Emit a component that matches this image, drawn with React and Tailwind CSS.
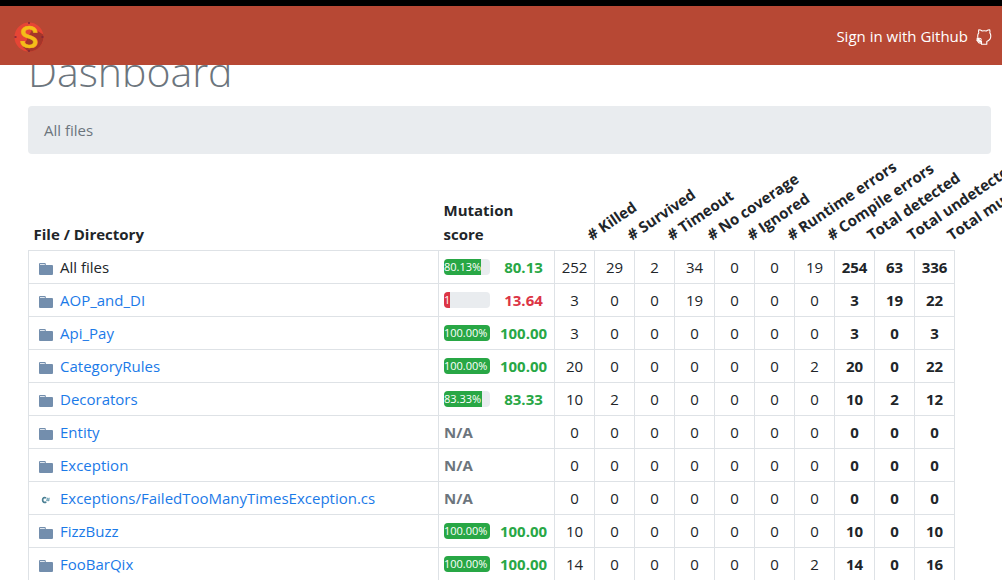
import clsx from "clsx";

const countHeaders = [
  "# Killed",
  "# Survived",
  "# Timeout",
  "# No coverage",
  "# Ignored",
  "# Runtime errors",
  "# Compile errors",
  "Total detected",
  "Total undetected",
  "Total mutants",
];

const rows = [
  { name: "All files", kind: "root", score: 80.13, counts: [252, 29, 2, 34, 0, 0, 19, 254, 63, 336] },
  { name: "AOP_and_DI", kind: "folder", score: 13.64, label: "1", counts: [3, 0, 0, 19, 0, 0, 0, 3, 19, 22] },
  { name: "Api_Pay", kind: "folder", score: 100, counts: [3, 0, 0, 0, 0, 0, 0, 3, 0, 3] },
  { name: "CategoryRules", kind: "folder", score: 100, counts: [20, 0, 0, 0, 0, 0, 2, 20, 0, 22] },
  { name: "Decorators", kind: "folder", score: 83.33, counts: [10, 2, 0, 0, 0, 0, 0, 10, 2, 12] },
  { name: "Entity", kind: "folder", score: null, counts: [0, 0, 0, 0, 0, 0, 0, 0, 0, 0] },
  { name: "Exception", kind: "folder", score: null, counts: [0, 0, 0, 0, 0, 0, 0, 0, 0, 0] },
  { name: "Exceptions/FailedTooManyTimesException.cs", kind: "file", score: null, counts: [0, 0, 0, 0, 0, 0, 0, 0, 0, 0] },
  { name: "FizzBuzz", kind: "folder", score: 100, counts: [10, 0, 0, 0, 0, 0, 0, 10, 0, 10] },
  { name: "FooBarQix", kind: "folder", score: 100, counts: [14, 0, 0, 0, 0, 0, 2, 14, 0, 16] },
];

function Logo() {
  return (
    <svg viewBox="0 0 32 32" className="size-8" role="img" aria-label="Stryker">
      <circle cx="16" cy="17" r="14.500" fill="#e64535" />
      <path d="M20 8 30.200 14.500A14.500 14.500 0 0 1 15 31.500L10 27Z" fill="#a5362a" />
      <path d="M16 2v2M16 30v2M1.500 17h2M28.500 17h2" stroke="#7d2438" strokeWidth="1.400" />
      <text x="16" y="28" textAnchor="middle" fontSize="31" fontWeight="500" fontFamily="Roboto, sans-serif" fill="#f5bd18" stroke="#f5bd18" strokeWidth="0.500">
        S
      </text>
    </svg>
  );
}

function GithubIcon() {
  return (
    <svg viewBox="0 0 16 16" className="mt-0.5 size-4" fill="none" stroke="currentColor" strokeWidth="1.1" strokeLinejoin="round" strokeLinecap="round" aria-hidden="true">
      <path d="M5.500 15.300V12.400C3.200 11.600 1.700 10 1.700 7.200c0-1.500.4-2.500 1.100-3.300-.4-1.200-.3-2.200 0-3.200 1.200 0 2.300.5 3.400 1.300 1.400-.3 2.800-.3 4.100 0C11.400 1.200 12.500.7 13.700.7c.4 1 .4 2 .1 3.200.6.8 1 1.800 1 3.200 0 2.900-1.500 4.500-4 5.300v2.900Z" />
      <path d="M5.300 14c-2.300.7-3-.6-3.400-1.500C1.600 11.800 1 11.300.7 11c1-.7 2.100 0 2.700 1 .5.700 1.100.8 1.900.5M1 9.300l2.300 1" />
      <circle cx="3.600" cy="10.800" r="1.600" />
    </svg>
  );
}

function FolderIcon() {
  return (
    <svg viewBox="0 0 14 12" className="mt-1 h-3 w-3.5" aria-hidden="true">
      <path d="M0 1.200Q0 0 1 0h4.800q1 0 1 1v1H13q1 0 1 1v8q0 1-1 1H1q-1 0-1-1Z" fill="#738ead" />
      <path d="M1 1h4.800v1H1Z" fill="#dfe6ee" />
    </svg>
  );
}

function CSharpIcon() {
  return (
    <svg viewBox="0 0 14 12" className="mt-1 h-3 w-3.5" fill="none" stroke="#5591a8" aria-hidden="true">
      <path d="M7 4.200C5.500 2.800 3.600 4 3.600 6s1.900 3.200 3.600 1.800" stroke="#4c8094" strokeWidth="1.700" />
      <path d="M8.600 3.700 7.800 7.300M10.200 3.700 9.400 7.300M7.400 4.900h3.300M7.200 6.300h3.300" strokeWidth="0.700" />
    </svg>
  );
}

function Score({ name, score, label }) {
  if (score === null) {
    return <span className="font-bold text-[#6c757d]">N/A</span>;
  }
  const low = score < 60;
  return (
    <div className="flex items-center">
      <div
        role="progressbar"
        aria-label={`${name} mutation score`}
        aria-valuenow={score}
        className="h-4 w-[46px] flex-none overflow-hidden rounded bg-[#e9ecef]"
      >
        <div
          className={clsx("h-full overflow-hidden text-[11px] leading-4 whitespace-nowrap text-white", low ? "bg-[#dc3545]" : "bg-[#28a745]")}
          style={{ width: `${score}%` }}
        >
          {label ?? `${score.toFixed(2)}%`}
        </div>
      </div>
      <span className={clsx("flex-1 pl-2 text-center font-bold", low ? "text-[#dc3545]" : "text-[#28a745]")}>{score.toFixed(2)}</span>
    </div>
  );
}

export default function App() {
  return (
    <div className="h-screen overflow-hidden bg-white font-['Open_Sans',sans-serif] text-[15px] leading-6 text-[#212529]">
      <header className="relative z-10 flex items-center justify-between border-t-6 border-black bg-[#b74834] pt-3.5 pr-2.5 pb-[13px] pl-[13px]">
        <a href="#home" className="block">
          <Logo />
        </a>
        <a href="#signin" className="flex items-center gap-2 text-white">
          Sign in with Github
          <GithubIcon />
        </a>
      </header>

      <main className="pr-[11px] pl-7">
        <h1 className="-mt-5 text-[41px] leading-[53px] font-light text-[#6c757d]">Dashboard</h1>
        <nav aria-label="Breadcrumb" className="mt-2 rounded bg-[#e9ecef] px-4 py-3 text-[#6c757d]">
          All files
        </nav>

        <div className="mt-11 pr-9">
          <table className="w-full table-fixed border-collapse">
            <colgroup>
              <col />
              <col className="w-[116px]" />
              {countHeaders.map((header) => (
                <col key={header} className="w-10" />
              ))}
            </colgroup>
            <thead>
              <tr className="align-bottom">
                <th scope="col" className="px-[5px] pb-1 text-left">File / Directory</th>
                <th scope="col" className="pr-10 pb-1 pl-[5px] text-left">Mutation score</th>
                {countHeaders.map((header) => (
                  <th key={header} scope="col" className="pb-1 text-left">
                    <div className="w-10 origin-bottom-left translate-x-10 -rotate-[34deg] whitespace-nowrap">{header}</div>
                  </th>
                ))}
              </tr>
            </thead>
            <tbody>
              {rows.map((row) => (
                <tr key={row.name} className="h-[33px] border border-[#dee2e6]">
                  <td className="px-2.5">
                    <div className="flex items-center gap-[7px]">
                      {row.kind === "file" ? <CSharpIcon /> : <FolderIcon />}
                      {row.kind === "root" ? (
                        <span>{row.name}</span>
                      ) : (
                        <a href={`#${row.name}`} className="text-[#1b7ae8]">{row.name}</a>
                      )}
                    </div>
                  </td>
                  <td className="border-x border-[#dee2e6] px-[5px]">
                    <Score name={row.name} score={row.score} label={row.label} />
                  </td>
                  {row.counts.map((count, i) => (
                    <td key={countHeaders[i]} className={clsx("border-x border-[#dee2e6] text-center", i > 6 && "font-bold")}>
                      {count}
                    </td>
                  ))}
                </tr>
              ))}
            </tbody>
          </table>
        </div>
      </main>
    </div>
  );
}
